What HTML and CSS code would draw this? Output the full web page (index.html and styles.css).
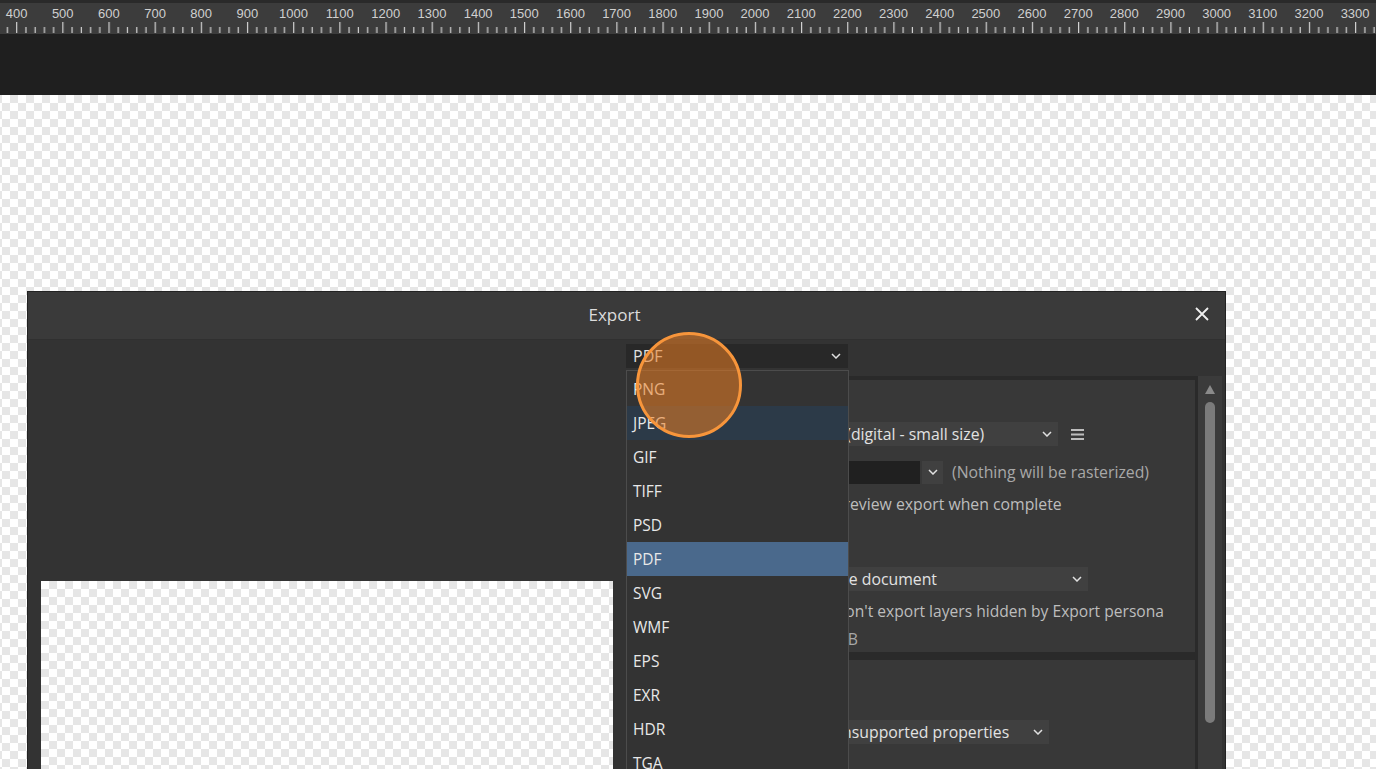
FILE: index.html
```html
<!DOCTYPE html>
<html lang="en">
  <head>
    <meta charset="UTF-8" />
    <title>Export</title>
    <link rel="stylesheet" href="styles.css">
  </head>
  <body>
    <div class="ruler">
      <svg class="ruler_ticks" width="1376" height="31">
        <defs>
          <pattern id="ticks" x="16.1" y="0" width="46.17" height="31" patternUnits="userSpaceOnUse">
            <rect x="0" y="19" width="1.2" height="11" fill="#d2d2d2" />
            <rect x="9.23" y="24" width="1.2" height="6" fill="#d2d2d2" />
            <rect x="18.47" y="24" width="1.2" height="6" fill="#d2d2d2" />
            <rect x="27.7" y="24" width="1.2" height="6" fill="#d2d2d2" />
            <rect x="36.94" y="24" width="1.2" height="6" fill="#d2d2d2" />
          </pattern>
        </defs>
        <rect width="1376" height="31" fill="url(#ticks)" />
      </svg>
      <div class="ruler_labels">
        <span>400</span><span>500</span><span>600</span><span>700</span><span>800</span>
        <span>900</span><span>1000</span><span>1100</span><span>1200</span><span>1300</span>
        <span>1400</span><span>1500</span><span>1600</span><span>1700</span><span>1800</span>
        <span>1900</span><span>2000</span><span>2100</span><span>2200</span><span>2300</span>
        <span>2400</span><span>2500</span><span>2600</span><span>2700</span><span>2800</span>
        <span>2900</span><span>3000</span><span>3100</span><span>3200</span><span>3300</span>
      </div>
    </div>
    <div class="toolbar"></div>

    <div class="canvas">
      <div class="dialog">
        <div class="titlebar">
          <span></span>
          <span class="title">Export</span>
          <button class="close">
            <svg width="14" height="14" viewBox="0 0 14 14">
              <path d="M1 1L13 13M13 1L1 13" stroke="#f0f0f0" stroke-width="1.8" fill="none" />
            </svg>
          </button>
        </div>

        <div class="dlg_body">
          <div class="preview_col">
            <div class="preview"></div>
          </div>

          <div class="settings_col">
            <div class="format_select">
              <span>PDF</span>
              <svg width="10" height="6" viewBox="0 0 10 6"><path d="M1 1l4 4 4-4" fill="none" stroke="#e0e0e0" stroke-width="1.5" /></svg>
            </div>

            <div class="panels_wrap">
              <div class="panels">
                <section class="panel panel_1">
                  <div class="row row_preset">
                    <span class="label"></span>
                    <div class="select w_preset">
                      <span>PDF (digital - small size)</span>
                      <svg width="10" height="6" viewBox="0 0 10 6"><path d="M1 1l4 4 4-4" fill="none" stroke="#e0e0e0" stroke-width="1.5" /></svg>
                    </div>
                    <svg class="menu_icon" width="13" height="11" viewBox="0 0 13 11">
                      <path d="M0 1h13M0 5.5h13M0 10h13" stroke="#bdbdbd" stroke-width="1.8" />
                    </svg>
                  </div>
                  <div class="row row_raster">
                    <span class="label"></span>
                    <div class="dark_input"></div>
                    <div class="small_btn">
                      <svg width="10" height="6" viewBox="0 0 10 6"><path d="M1 1l4 4 4-4" fill="none" stroke="#e0e0e0" stroke-width="1.5" /></svg>
                    </div>
                    <span class="note">(Nothing will be rasterized)</span>
                  </div>
                  <div class="row row_preview">
                    <span class="label"></span>
                    <label class="check"><span class="box"></span>Preview export when complete</label>
                  </div>
                  <div class="row row_area">
                    <span class="label"></span>
                    <div class="select w_area">
                      <span>Whole document</span>
                      <svg width="10" height="6" viewBox="0 0 10 6"><path d="M1 1l4 4 4-4" fill="none" stroke="#e0e0e0" stroke-width="1.5" /></svg>
                    </div>
                  </div>
                  <div class="row row_hidden">
                    <span class="label"></span>
                    <label class="check"><span class="box"></span>Don't export layers hidden by Export persona</label>
                  </div>
                  <div class="row row_size">
                    <span class="label"></span>
                    <span class="size">123 KB</span>
                  </div>
                </section>

                <section class="panel panel_2">
                  <div class="row row_compat">
                    <span class="label"></span>
                    <div class="select w_compat">
                      <span>Rasterize unsupported properties</span>
                      <svg width="10" height="6" viewBox="0 0 10 6"><path d="M1 1l4 4 4-4" fill="none" stroke="#e0e0e0" stroke-width="1.5" /></svg>
                    </div>
                  </div>
                </section>
              </div>

              <div class="scrollbar">
                <span class="arrow"></span>
                <span class="thumb"></span>
              </div>
            </div>
          </div>
        </div>

        <ul class="format_menu">
          <li>PNG</li>
          <li class="hover">JPEG</li>
          <li>GIF</li>
          <li>TIFF</li>
          <li>PSD</li>
          <li class="selected">PDF</li>
          <li>SVG</li>
          <li>WMF</li>
          <li>EPS</li>
          <li>EXR</li>
          <li>HDR</li>
          <li>TGA</li>
        </ul>

        <div class="click_mark"></div>
      </div>
    </div>
  </body>
</html>
```

FILE: styles.css
```css
* {
  box-sizing: border-box;
}
html,
body {
  margin: 0;
  height: 100%;
  overflow: hidden;
}
body {
  background: #1f1f1f;
  font-family: "Open Sans", "Noto Sans", sans-serif;
}

/* ruler */
.ruler {
  height: 34px;
  background: #3c3c3c;
  border-top: 3px solid #2a2a2a;
  display: grid;
  overflow: hidden;
}
.ruler > * {
  grid-area: 1 / 1;
}
.ruler_ticks {
  display: block;
}
.ruler_labels {
  display: flex;
  margin-left: -6.5px;
  padding-top: 3px;
  font: 13px/15px "Liberation Sans", Arial, sans-serif;
  color: #d0d0d0;
  white-space: nowrap;
}
.ruler_labels span {
  flex: 0 0 46.17px;
  text-align: center;
}
.toolbar {
  height: 61px;
  background: #1f1f1f;
}

/* canvas */
.canvas {
  height: calc(100% - 95px);
  overflow: hidden;
  padding: 196px 0 0 27px;
  background: repeating-conic-gradient(#e6e6e6 0 25%, #ffffff 0 50%) 2px 0 / 16px 16px;
}

/* dialog */
.dialog {
  position: relative;
  width: 1199px;
  height: 600px;
  border: 1px solid #222;
  background: #333;
  display: flex;
  flex-direction: column;
  color: #e0e0e0;
  font-size: 15px;
}
.titlebar {
  height: 48px;
  flex-shrink: 0;
  background: #3a3a3a;
  border-bottom: 1px solid #303030;
  padding-bottom: 3px;
  display: grid;
  grid-template-columns: 1fr auto 1fr;
  align-items: center;
}
.title {
  font-size: 17px;
  color: #dcdcdc;
  margin-right: 24px;
}
.close {
  justify-self: end;
  width: 30px;
  height: 30px;
  margin-right: 8px;
  border: 0;
  background: none;
  padding: 0;
  display: flex;
  align-items: center;
  justify-content: center;
}

.dlg_body {
  flex-grow: 1;
  display: flex;
  padding: 0 3px 0 13px;
}
.preview_col {
  flex: 0 0 572px;
  padding-top: 241px;
}
.preview {
  height: 300px;
  background: repeating-conic-gradient(#e6e6e6 0 25%, #ffffff 0 50%) 0 0 / 16px 16px;
}
.settings_col {
  flex: 0 0 596px;
  margin-left: 13px;
  display: flex;
  flex-direction: column;
}
.format_select {
  margin-top: 4px;
  width: 222px;
  height: 24px;
  background: #282828;
  display: flex;
  align-items: center;
  justify-content: space-between;
  padding: 0 7px 0 7px;
  font-size: 16px;
  color: #e0e0e0;
}

.panels_wrap {
  margin-top: 8px;
  flex-grow: 1;
  display: flex;
}
.panels {
  flex-grow: 1;
  background: #2a2a2a;
  padding: 4px 3px 0 4px;
}
.panel {
  background: #383838;
  font-size: 15.8px;
}
.panel_1 {
  height: 272px;
  padding-top: 42px;
}
.panel_2 {
  margin-top: 8px;
  height: 200px;
  padding-top: 60px;
}
.row {
  display: flex;
  align-items: center;
  height: 24px;
  white-space: nowrap;
}
.label {
  flex: 0 0 175px;
}
.row_raster {
  margin-top: 14px;
}
.row_preview {
  margin-top: 8px;
}
.row_area {
  margin-top: 51px;
}
.row_hidden {
  margin-top: 8px;
  font-size: 15.6px;
}
.row_size {
  margin-top: 4px;
}
.select {
  height: 24px;
  background: #404040;
  display: flex;
  align-items: center;
  justify-content: space-between;
  padding: 0 6px 0 8px;
  color: #e2e2e2;
}
.w_preset {
  width: 253px;
}
.w_area {
  width: 283px;
}
.w_area span {
  margin-left: -2px;
}
.row_compat .label {
  flex-basis: 123px;
}
.w_compat {
  width: 296px;
}
.menu_icon {
  margin-left: 13px;
}
.dark_input {
  width: 115px;
  height: 23px;
  background: #202020;
}
.small_btn {
  width: 21px;
  height: 23px;
  margin-left: 2px;
  background: #404040;
  display: flex;
  align-items: center;
  justify-content: center;
}
.note {
  margin-left: 9px;
  color: #a8a8a8;
}
.check {
  display: flex;
  align-items: center;
  color: #bdbdbd;
}
.check .box {
  width: 15px;
  height: 15px;
  margin: 0 8px 0 6px;
  border: 1px solid #777;
  background: #2a2a2a;
}
.size {
  padding-left: 2px;
  color: #a8a8a8;
}

.scrollbar {
  flex: 0 0 24px;
  background: #3b3b3b;
  display: flex;
  flex-direction: column;
  align-items: center;
  padding-top: 9px;
}
.arrow {
  width: 0;
  height: 0;
  border-left: 5px solid transparent;
  border-right: 5px solid transparent;
  border-bottom: 9px solid #8a8a8a;
}
.thumb {
  margin-top: 8px;
  width: 10px;
  height: 321px;
  border-radius: 5px;
  background: #7b7b7b;
}

/* open format menu */
.format_menu {
  position: absolute;
  left: 598px;
  top: 78px;
  width: 223px;
  height: 420px;
  margin: 0;
  padding: 1px 0 0 0;
  list-style: none;
  background: #333;
  border: 1px solid #4c4c4c;
}
.format_menu li {
  height: 34px;
  padding-top: 1px;
  line-height: 33px;
  padding-left: 6px;
  font-size: 15.5px;
  color: #e8e8e8;
}
.format_menu li.hover {
  background: #2c3a48;
}
.format_menu li.selected {
  background: #4a698c;
}

/* click marker */
.click_mark {
  position: absolute;
  left: 608px;
  top: 40px;
  width: 106px;
  height: 106px;
  border-radius: 50%;
  border: 3.5px solid #f7953b;
  background: rgba(235, 125, 35, 0.55);
}
```
